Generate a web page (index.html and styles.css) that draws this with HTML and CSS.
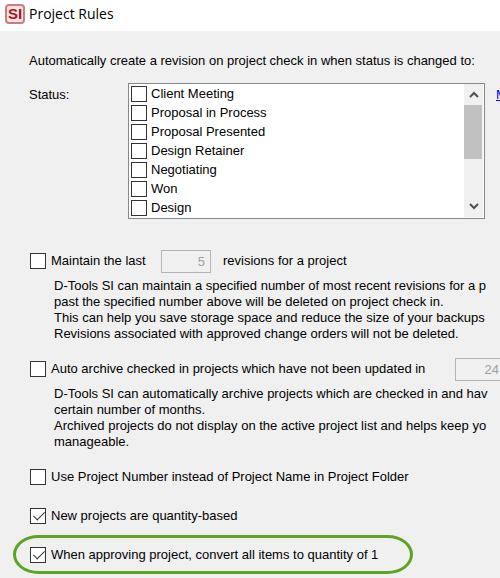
FILE: index.html
```
<!DOCTYPE html>
<html lang="en">
<head>
  <meta charset="UTF-8">
  <meta name="viewport" content="width=device-width, initial-scale=1">
  <title>Project Rules</title>
  <link rel="stylesheet" href="styles.css">
</head>
<body>
  <header class="titlebar">
    <span class="logo">SI</span>
    <h1>Project Rules</h1>
  </header>

  <main class="rules">
    <p class="intro">Automatically create a revision on project check in when status is changed to:</p>

    <div class="status">
      <span class="status-label" id="statusLabel">Status:</span>
      <div class="listbox" role="group" aria-labelledby="statusLabel">
        <div class="items">
          <label><input type="checkbox">Client Meeting</label>
          <label><input type="checkbox">Proposal in Process</label>
          <label><input type="checkbox">Proposal Presented</label>
          <label><input type="checkbox">Design Retainer</label>
          <label><input type="checkbox">Negotiating</label>
          <label><input type="checkbox">Won</label>
          <label><input type="checkbox">Design</label>
        </div>
        <div class="scrollbar">
          <button type="button" aria-label="Scroll up">
            <svg viewBox="0 0 10 7"><path d="M1 6L5 2L9 6"/></svg>
          </button>
          <div class="track"><div class="thumb"></div></div>
          <button type="button" aria-label="Scroll down">
            <svg viewBox="0 0 10 7"><path d="M1 1L5 5L9 1"/></svg>
          </button>
        </div>
      </div>
      <a class="more" href="#">M</a>
    </div>

    <div class="rule">
      <input type="checkbox" id="maintain">
      <label class="label-short" for="maintain">Maintain the last</label>
      <input type="text" class="number" value="5" aria-label="Revisions to keep" disabled>
      <span>revisions for a project</span>
    </div>
    <p class="help">
      D-Tools SI can maintain a specified number of most recent revisions for a p<br>
      past the specified number above will be deleted on project check in.<br>
      This can help you save storage space and reduce the size of your backups<br>
      Revisions associated with approved change orders will not be deleted.
    </p>

    <div class="rule">
      <input type="checkbox" id="archive">
      <label class="label-long" for="archive">Auto archive checked in projects which have not been updated in</label>
      <input type="text" class="number" value="24" aria-label="Months before archiving" disabled>
    </div>
    <p class="help">
      D-Tools SI can automatically archive projects which are checked in and hav<br>
      certain number of months.<br>
      Archived projects do not display on the active project list and helps keep yo<br>
      manageable.
    </p>

    <div class="rule single">
      <input type="checkbox" id="folder">
      <label for="folder">Use Project Number instead of Project Name in Project Folder</label>
    </div>
    <div class="rule single">
      <input type="checkbox" id="quantity" checked>
      <label for="quantity">New projects are quantity-based</label>
    </div>
    <div class="rule highlight">
      <input type="checkbox" id="convert" checked>
      <label for="convert">When approving project, convert all items to quantity of 1</label>
    </div>
  </main>
</body>
</html>
```
FILE: styles.css
```
* {
  box-sizing: border-box;
}

body {
  margin: 0;
  min-height: 100vh;
  overflow: hidden;
  background: #f0f0f0;
  color: #000;
  font-family: "Liberation Sans", Arial, sans-serif;
  font-size: 13px;
  line-height: 16px;
}

.titlebar {
  display: flex;
  align-items: center;
  gap: 4px;
  height: 31px;
  padding: 0 5px 4px;
  background: #fff;
}

.logo {
  width: 20px;
  height: 20px;
  border: 2px solid #cf7c7f;
  border-radius: 4px;
  background: #f8e4e4;
  color: #a8161d;
  font-size: 15px;
  font-weight: 700;
  line-height: 16px;
  text-align: center;
}

h1 {
  margin: 0;
  font-family: "Open Sans", "Noto Sans", sans-serif;
  font-size: 14px;
  font-weight: 400;
  line-height: 20px;
}

.rules {
  padding: 22px 0 4px 29px;
  white-space: nowrap;
}

p {
  margin: 0;
}

.intro {
  margin-bottom: 14px;
}

.status {
  display: flex;
  align-items: flex-start;
  margin-bottom: 30px;
}

.status-label {
  width: 99px;
  flex-shrink: 0;
  padding-top: 4px;
}

.listbox {
  display: flex;
  width: 357px;
  flex-shrink: 0;
  padding: 0 1px 1px;
  border: 1px solid #828790;
  background: #fff;
}

.items {
  flex: 1;
  padding-left: 1px;
}

.items label {
  display: flex;
  align-items: center;
  gap: 4px;
  height: 19px;
}

.more {
  margin-left: 11px;
  padding-top: 4px;
  color: #00f;
}

.scrollbar {
  display: flex;
  flex-direction: column;
  width: 19px;
  background: #f0f0f0;
}

.scrollbar button {
  display: flex;
  align-items: center;
  justify-content: center;
  height: 21px;
  padding: 0;
  border: none;
  background: none;
}

.scrollbar svg {
  width: 10px;
  height: 7px;
  fill: none;
  stroke: #505050;
  stroke-width: 2;
}

.track {
  flex: 1;
}

.thumb {
  height: 54px;
  margin-right: 1px;
  background: #c1c1c1;
}

input[type="checkbox"] {
  appearance: none;
  width: 16px;
  height: 16px;
  margin: 0;
  flex-shrink: 0;
  border: 1px solid #333;
  background: #fff;
}

/* tick is a rotated corner */
input[type="checkbox"]:checked::after {
  content: "";
  display: block;
  width: 5px;
  height: 10px;
  margin: 0 0 0 5px;
  border: solid #333;
  border-width: 0 1px 1px 0;
  transform: rotate(45deg);
}

.rule {
  display: flex;
  align-items: center;
  height: 24px;
  padding-left: 1px;
}

.rule label {
  margin-left: 5px;
}

.label-short {
  width: 98px;
}

.label-long {
  width: 392px;
}

.number {
  width: 50px;
  height: 23px;
  margin: 0 12px;
  padding: 0 5px;
  flex-shrink: 0;
  border: 1px solid #b4b4b8;
  background: #f0f0f0;
  color: #a0a0a0;
  font: inherit;
  text-align: right;
}

.rule .label-long {
  flex-shrink: 0;
}

.help {
  margin: 5px 0 15px;
  padding-left: 25px;
}

.single {
  margin-bottom: 15px;
}

.highlight {
  width: 400px;
  height: 39px;
  margin: -8px 0 0 -16px;
  padding-left: 14px;
  border: 3px solid #5da423;
  border-radius: 26px / 20px;
}
```
